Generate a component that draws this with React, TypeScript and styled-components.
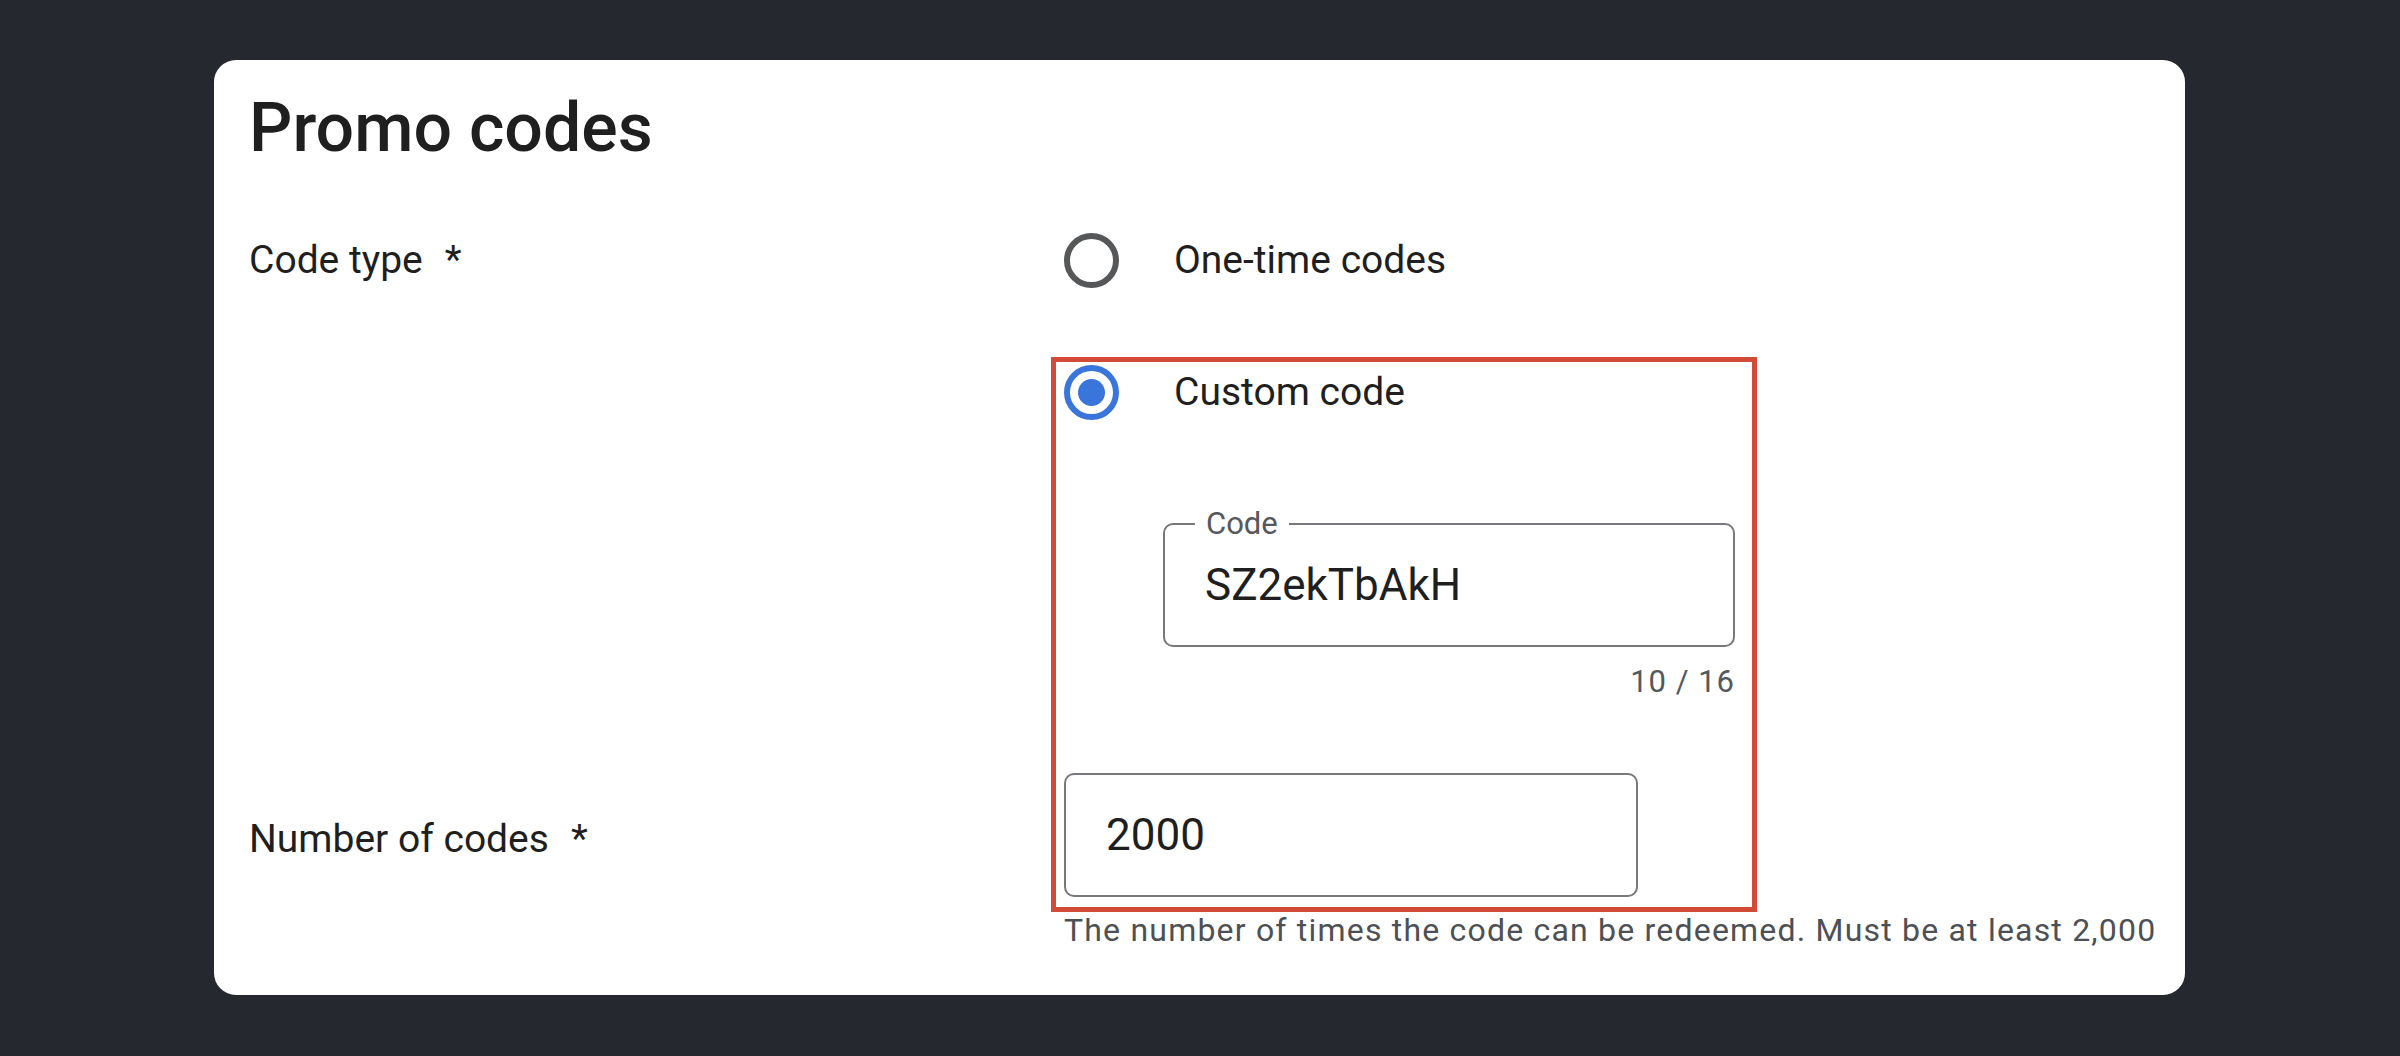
import styled, { createGlobalStyle } from 'styled-components';

const GlobalStyle = createGlobalStyle`
  html, body {
    margin: 0;
    padding: 0;
    background: #25282f;
  }
  body {
    font-family: Roboto, "Liberation Sans", Arial, sans-serif;
    color: #1f1f1f;
  }
`;

const Page = styled.div`
  box-sizing: border-box;
  min-height: 1056px;
  padding: 60px 0 0 214px;
`;

const Card = styled.section`
  box-sizing: border-box;
  width: 1971px;
  height: 935px;
  background: #ffffff;
  border-radius: 22px;
  padding: 29px 35px 0 35px;
`;

const Title = styled.h1`
  margin: 0;
  font-size: 68px;
  line-height: 79px;
  font-weight: 500;
  color: #1f1f1f;
`;

const Form = styled.div`
  display: grid;
  grid-template-columns: 815px 1fr;
  margin-top: 65px;
`;

const FieldLabel = styled.div<{ $row: number; $offset?: number; $height?: number }>`
  grid-column: 1;
  grid-row: ${p => p.$row};
  margin-top: ${p => p.$offset ?? 0}px;
  padding-top: ${p => (p.$height ? 4 : 0)}px;
  font-size: 39px;
  line-height: ${p => p.$height ?? 54}px;
  color: #1f1f1f;
`;

const Required = styled.span`
  margin-left: 22px;
`;

const Cell = styled.div<{ $row: number; $offset?: number }>`
  grid-column: 2;
  grid-row: ${p => p.$row};
  margin-top: ${p => p.$offset ?? 0}px;
  display: flex;
  flex-direction: column;
  align-items: flex-start;
`;

const Choice = styled.label`
  display: flex;
  align-items: center;
  height: 54px;
  gap: 55px;
  font-size: 39px;
  line-height: 54px;
  color: #1f1f1f;
  cursor: pointer;
`;

const Radio = styled.span<{ $checked?: boolean }>`
  box-sizing: border-box;
  width: 55px;
  height: 55px;
  border-radius: 50%;
  border: 6px solid ${p => (p.$checked ? '#3a75dc' : '#555759')};
  display: flex;
  align-items: center;
  justify-content: center;

  &::after {
    content: '';
    width: 27px;
    height: 27px;
    border-radius: 50%;
    background: ${p => (p.$checked ? '#3a75dc' : 'transparent')};
  }
`;

const Outlined = styled.div<{ $width: number; $indent?: number; $offset?: number }>`
  position: relative;
  box-sizing: border-box;
  width: ${p => p.$width}px;
  height: 124px;
  margin-left: ${p => p.$indent ?? 0}px;
  margin-top: ${p => p.$offset ?? 0}px;
  border: 2px solid #77797c;
  border-radius: 10px;
  padding-left: 40px;
  display: flex;
  align-items: center;
  font-size: 44px;
  color: #1f1f1f;
`;

const FloatingLabel = styled.span`
  position: absolute;
  left: 30px;
  top: -21px;
  padding: 0 11px;
  background: #ffffff;
  font-size: 31px;
  line-height: 40px;
  color: #55585c;
`;

const Counter = styled.div`
  width: 572px;
  margin-left: 99px;
  margin-top: 15px;
  text-align: right;
  font-size: 31px;
  line-height: 40px;
  letter-spacing: 1px;
  color: #55585c;
`;

const Helper = styled.div`
  grid-column: 2;
  grid-row: 4;
  margin-top: 9px;
  white-space: nowrap;
  font-size: 32px;
  line-height: 40px;
  letter-spacing: 1.2px;
  color: #4d5054;
`;

const Highlight = styled.div`
  grid-column: 2;
  grid-row: 2 / 4;
  justify-self: start;
  box-sizing: border-box;
  width: 706px;
  margin: 70px 0 -11px -13px;
  border: 5px solid #d24b36;
  pointer-events: none;
`;

export default function App() {
  return (
    <>
      <GlobalStyle />
      <Page>
        <Card>
          <Title>Promo codes</Title>
          <Form>
            <FieldLabel $row={1}>
              Code type<Required>*</Required>
            </FieldLabel>
            <Cell $row={1}>
              <Choice>
                <Radio />
                One-time codes
              </Choice>
            </Cell>

            <Cell $row={2} $offset={78}>
              <Choice>
                <Radio $checked />
                Custom code
              </Choice>
              <Outlined $width={572} $indent={99} $offset={104}>
                <FloatingLabel>Code</FloatingLabel>
                SZ2ekTbAkH
              </Outlined>
              <Counter>10 / 16</Counter>
            </Cell>

            <FieldLabel $row={3} $offset={71} $height={124}>
              Number of codes<Required>*</Required>
            </FieldLabel>
            <Cell $row={3} $offset={71}>
              <Outlined $width={574}>2000</Outlined>
            </Cell>

            <Helper>The number of times the code can be redeemed. Must be at least 2,000</Helper>

            <Highlight />
          </Form>
        </Card>
      </Page>
    </>
  );
}
